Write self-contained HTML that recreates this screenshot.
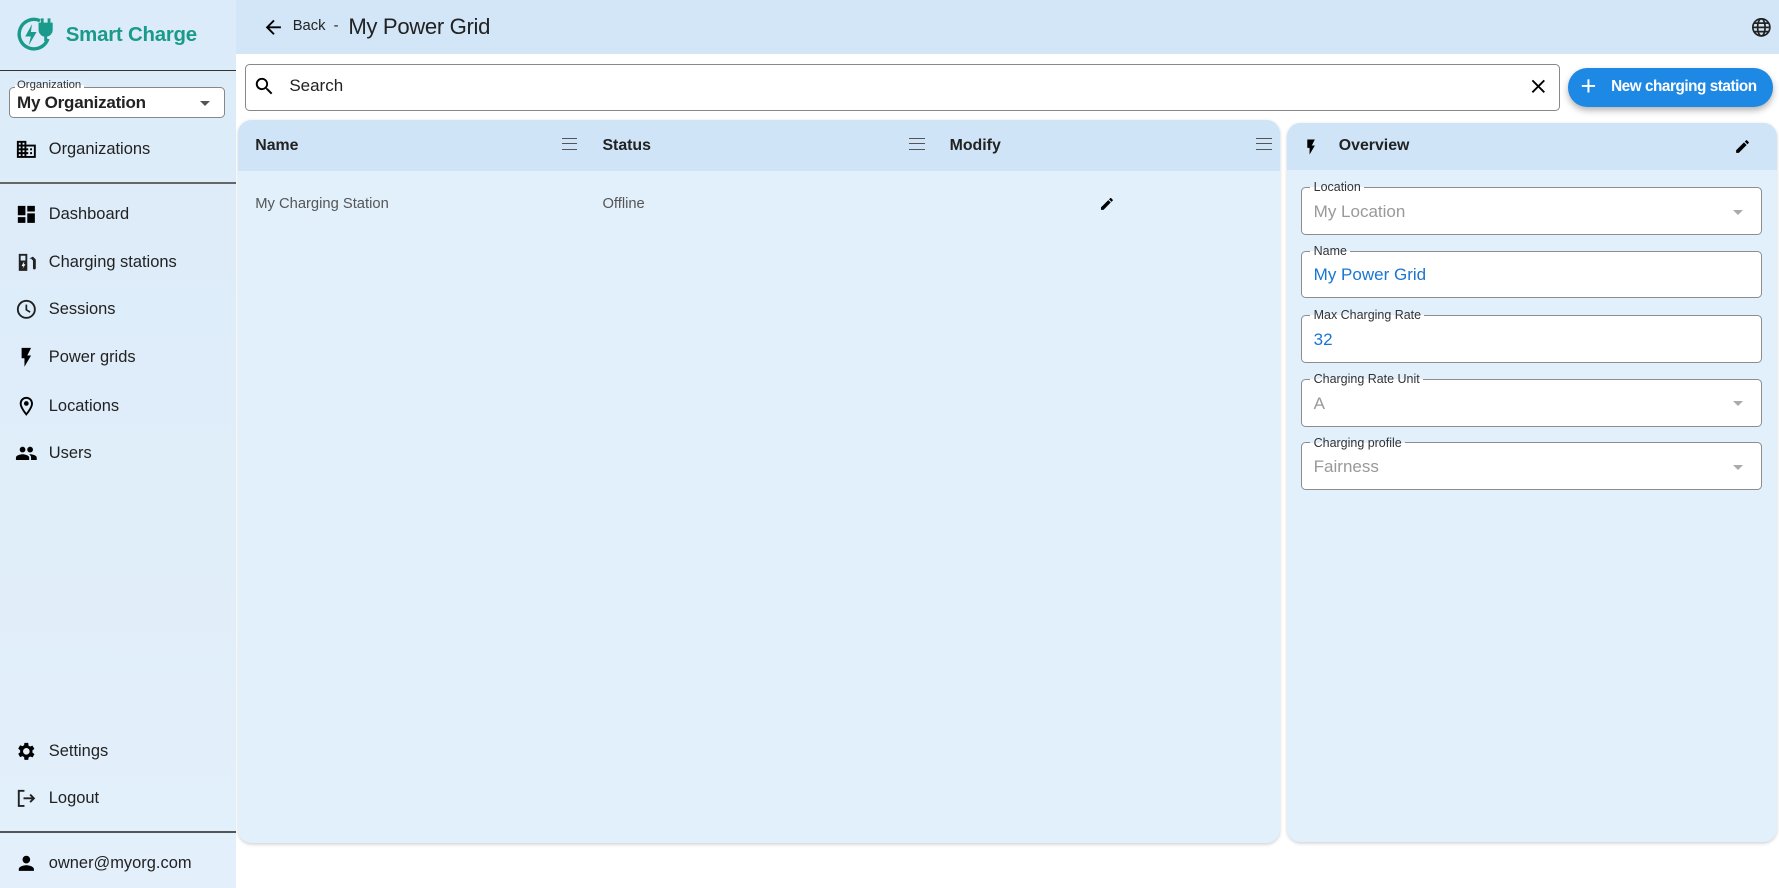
<!DOCTYPE html>
<html><head><meta charset="utf-8"><style>
html{zoom:1.13457}
*{box-sizing:border-box;margin:0;padding:0}
body{width:1568px;height:783px;overflow:hidden;font-family:"Liberation Sans",Roboto,sans-serif;background:#fff;position:relative;color:#222}
.abs{position:absolute}
.side{left:0;top:0;width:208px;height:783px;background:linear-gradient(180deg,#dcebf9,#e3f0fb)}
.top{left:208px;top:0;width:1360px;height:48px;background:#d2e6f8}
.nav{position:absolute;left:0;width:208px;height:36px;display:flex;align-items:center;font-size:14.5px;color:#222;letter-spacing:0}
.nav svg{position:absolute;left:13px;width:20px;height:20px}
.nav span{position:absolute;left:43px}
.card{background:#e2f0fc;border-radius:12px;overflow:hidden;box-shadow:0 1px 3px rgba(0,0,0,.18)}
.hdr{background:#cfe4f7;height:45px;position:relative}
.fld{position:absolute;left:13px;width:406px;height:42px;border:1px solid #8d8d8d;border-radius:4px;background:#fff}
.fld .lb{position:absolute;left:7px;top:-7px;font-size:11px;background:linear-gradient(#e2f0fc 50%,#fff 50%);padding:0 3px;color:#333}
.fld .v{position:absolute;left:10px;top:12px;font-size:15px}
.caret{position:absolute;right:16px;top:19px;border-left:5px solid transparent;border-right:5px solid transparent;border-top:5px solid #aaa}
.menu{position:absolute;top:16px;width:14px;height:10px;border-top:1.5px solid #555;border-bottom:1.5px solid #555}
.menu:after{content:"";position:absolute;left:0;right:0;top:3px;border-top:1.5px solid #555}
</style></head><body>
<div class="abs side"></div>
<div class="abs top"></div>
<svg class="abs" style="left:13px;top:13px" width="34" height="34" viewBox="0 0 34 34"><path d="M22 5 A13 13 0 1 0 29 21" fill="none" stroke="#1a9a8a" stroke-width="3"/><path d="M15 8 L9 19 H14 L12 27 L19 15 H14 Z" fill="#1a9a8a"/><path d="M22 8 h10 v5 a5 5 0 0 1-10 0z M24 3 v5 M30 3 v5 M27 17 v6" stroke="#1a9a8a" stroke-width="2.5" fill="#1a9a8a"/></svg>
<div class="abs" style="left:58px;top:21px;font-size:18px;font-weight:bold;color:#1a9a8a;letter-spacing:-.2px">Smart Charge</div>
<div class="abs" style="left:0;top:62px;width:208px;height:1px;background:#333"></div>
<div class="abs" style="left:8px;top:77px;width:190px;height:27px;border:1px solid #888;border-radius:4px;background:#fff"></div>
<div class="abs" style="left:13px;top:70px;font-size:10px;background:linear-gradient(#e0eefa 50%,#fff 50%);padding:0 2px;color:#333">Organization</div>
<div class="abs" style="left:15px;top:82px;font-size:15px;font-weight:bold;letter-spacing:-.2px">My Organization</div>
<div class="abs" style="left:176px;top:89px;border-left:5px solid transparent;border-right:5px solid transparent;border-top:5px solid #555"></div>
<div class="nav" style="top:114px"><svg viewBox="0 0 24 24"><path d="M12 7V3H2v18h20V7H12zM6 19H4v-2h2v2zm0-4H4v-2h2v2zm0-4H4V9h2v2zm0-4H4V5h2v2zm4 12H8v-2h2v2zm0-4H8v-2h2v2zm0-4H8V9h2v2zm0-4H8V5h2v2zm10 12h-8v-2h2v-2h-2v-2h2v-2h-2V9h8v10zm-2-8h-2v2h2v-2zm0 4h-2v2h2v-2z"/></svg><span>Organizations</span></div>
<div class="abs" style="left:0;top:160px;width:208px;height:2px;background:#666"></div>
<div class="nav" style="top:171px"><svg viewBox="0 0 24 24"><path d="M3 13h8V3H3v10zm0 8h8v-6H3v6zm10 0h8V11h-8v10zm0-18v6h8V3h-8z"/></svg><span>Dashboard</span></div>
<div class="nav" style="top:213px"><svg viewBox="0 0 24 24"><path d="M4 3h9v18H4z M6 5v5h5V5z M15 8h2l2 2v8a1.5 1.5 0 0 0 3 0v-9l-3-3" fill="#222"/><path d="M9 12l-2 4h2l-1 3 3-5H9l1-2z" fill="#fff"/></svg><span>Charging stations</span></div>
<div class="nav" style="top:255px"><svg viewBox="0 0 24 24"><circle cx="12" cy="12" r="9" fill="none" stroke="#222" stroke-width="2"/><path d="M12 7v5.5l4 2.4" fill="none" stroke="#222" stroke-width="1.8"/></svg><span>Sessions</span></div>
<div class="nav" style="top:297px"><svg viewBox="0 0 24 24"><path d="M7 2v11h3v9l7-12h-4l4-8z"/></svg><span>Power grids</span></div>
<div class="nav" style="top:340px"><svg viewBox="0 0 24 24"><path d="M12 2C8.1 2 5 5.1 5 9c0 5.2 7 13 7 13s7-7.8 7-13c0-3.9-3.1-7-7-7zm0 2a5 5 0 0 1 5 5c0 2.9-2.9 7.2-5 9.9C9.9 16.2 7 11.9 7 9a5 5 0 0 1 5-5zm0 2.5a2.5 2.5 0 1 0 0 5 2.5 2.5 0 0 0 0-5z"/></svg><span>Locations</span></div>
<div class="nav" style="top:382px"><svg viewBox="0 0 24 24"><path d="M16 11c1.7 0 3-1.3 3-3s-1.3-3-3-3-3 1.3-3 3 1.3 3 3 3zm-8 0c1.7 0 3-1.3 3-3S9.7 5 8 5 5 6.3 5 8s1.3 3 3 3zm0 2c-2.3 0-7 1.2-7 3.5V19h14v-2.5C15 14.2 10.3 13 8 13zm8 0c-.3 0-.6 0-1 .1 1.2.8 2 2 2 3.4V19h6v-2.5c0-2.3-4.7-3.5-7-3.5z"/></svg><span>Users</span></div>
<div class="nav" style="top:644px"><svg viewBox="0 0 24 24"><path d="M19.4 13c0-.3.1-.7.1-1s0-.7-.1-1l2.1-1.6-2-3.5-2.5 1c-.5-.4-1.1-.7-1.7-1L15 3h-4l-.4 2.6c-.6.3-1.2.6-1.7 1l-2.5-1-2 3.5L6.5 11c0 .3-.1.7-.1 1s0 .7.1 1l-2.1 1.6 2 3.5 2.5-1c.5.4 1.1.7 1.7 1L11 21h4l.4-2.6c.6-.3 1.2-.6 1.7-1l2.5 1 2-3.5-2.1-1.6zM13 15.5a3.5 3.5 0 1 1 0-7 3.5 3.5 0 0 1 0 7z" transform="translate(-1 0)"/></svg><span>Settings</span></div>
<div class="nav" style="top:686px"><svg viewBox="0 0 24 24"><path d="M10 4H4v16h6" fill="none" stroke="#222" stroke-width="2"/><path d="M9 12h11M16 8l4 4-4 4" fill="none" stroke="#222" stroke-width="2"/></svg><span>Logout</span></div>
<div class="abs" style="left:0;top:732px;width:208px;height:2px;background:#555"></div>
<div class="nav" style="top:743px"><svg viewBox="0 0 24 24"><path d="M12 12c2.2 0 4-1.8 4-4s-1.8-4-4-4-4 1.8-4 4 1.8 4 4 4zm0 2c-2.7 0-8 1.3-8 4v2h16v-2c0-2.7-5.3-4-8-4z"/></svg><span>owner@myorg.com</span></div>
<svg class="abs" style="left:231px;top:14px" width="20" height="20" viewBox="0 0 24 24"><path d="M20 11H7.8l5.6-5.6L12 4l-8 8 8 8 1.4-1.4L7.8 13H20z"/></svg>
<div class="abs" style="left:258px;top:16px;font-size:13px">Back&nbsp; -</div>
<div class="abs" style="left:307px;top:12px;font-size:19.5px;letter-spacing:-.3px">My Power Grid</div>
<svg class="abs" style="left:1542px;top:14px" width="20" height="20" viewBox="0 0 24 24"><g fill="none" stroke="#222" stroke-width="1.8"><circle cx="12" cy="12" r="9"/><ellipse cx="12" cy="12" rx="4" ry="9"/><path d="M3 12h18M4.5 7.5h15M4.5 16.5h15"/></g></svg>
<div class="abs" style="left:216px;top:56px;width:1159px;height:42px;border:1px solid #888;border-radius:4px;background:#fff"></div>
<svg class="abs" style="left:223px;top:66px" width="20" height="20" viewBox="0 0 24 24"><path d="M15.5 14h-.8l-.3-.3A6.5 6.5 0 1 0 9.5 16a6.5 6.5 0 0 0 4.2-1.6l.3.3v.8l5 5 1.5-1.5-5-5zm-6 0a4.5 4.5 0 1 1 0-9 4.5 4.5 0 0 1 0 9z"/></svg>
<div class="abs" style="left:255px;top:67px;font-size:15px">Search</div>
<svg class="abs" style="left:1346px;top:66px" width="20" height="20" viewBox="0 0 24 24"><path d="M19 6.4 17.6 5 12 10.6 6.4 5 5 6.4 10.6 12 5 17.6 6.4 19 12 13.4 17.6 19 19 17.6 13.4 12z"/></svg>
<div class="abs" style="left:1382px;top:60px;width:181px;height:34px;border-radius:17px;background:#1e88e5;box-shadow:0 3px 6px rgba(0,0,0,.3);color:#fff;font-size:13.5px;font-weight:bold">
<span style="position:absolute;left:11px;top:3px;font-size:24px;font-weight:normal;line-height:26px">+</span><span style="position:absolute;left:38px;top:9px;letter-spacing:-.4px;white-space:nowrap">New charging station</span></div>
<div class="abs card" style="left:210px;top:106px;width:918px;height:637px">
<div class="hdr">
<div class="abs" style="left:15px;top:15px;font-size:14px;font-weight:bold">Name</div>
<div class="menu" style="left:285px"></div>
<div class="abs" style="left:321px;top:15px;font-size:14px;font-weight:bold">Status</div>
<div class="menu" style="left:591px"></div>
<div class="abs" style="left:627px;top:15px;font-size:14px;font-weight:bold">Modify</div>
<div class="menu" style="left:897px"></div>
</div>
<div class="abs" style="left:15px;top:67px;font-size:13px;color:#555">My Charging Station</div>
<div class="abs" style="left:321px;top:67px;font-size:13px;color:#555">Offline</div>
<svg class="abs" style="left:759px;top:67px" width="14" height="14" viewBox="0 0 24 24"><path d="M3 17.2V21h3.8L17.8 9.9l-3.7-3.7L3 17.2zM20.7 7c.4-.4.4-1 0-1.4l-2.3-2.3c-.4-.4-1-.4-1.4 0l-1.8 1.8 3.7 3.7L20.7 7z"/></svg>
</div>
<div class="abs card" style="left:1134px;top:108px;width:432px;height:634px">
<div class="hdr" style="height:42px">
<svg class="abs" style="left:14px;top:14px" width="16" height="16" viewBox="0 0 24 24"><path d="M7 2v11h3v9l7-12h-4l4-8z"/></svg>
<div class="abs" style="left:46px;top:13px;font-size:14px;font-weight:bold">Overview</div>
<svg class="abs" style="left:394px;top:14px" width="15" height="15" viewBox="0 0 24 24"><path d="M3 17.2V21h3.8L17.8 9.9l-3.7-3.7L3 17.2zM20.7 7c.4-.4.4-1 0-1.4l-2.3-2.3c-.4-.4-1-.4-1.4 0l-1.8 1.8 3.7 3.7L20.7 7z"/></svg>
</div>
<div class="fld" style="top:57px"><div class="lb">Location</div><div class="v" style="color:#999">My Location</div><div class="caret"></div></div>
<div class="fld" style="top:113px"><div class="lb">Name</div><div class="v" style="color:#1976d2">My Power Grid</div></div>
<div class="fld" style="top:170px"><div class="lb">Max Charging Rate</div><div class="v" style="color:#1976d2">32</div></div>
<div class="fld" style="top:226px"><div class="lb">Charging Rate Unit</div><div class="v" style="color:#999">A</div><div class="caret"></div></div>
<div class="fld" style="top:282px"><div class="lb">Charging profile</div><div class="v" style="color:#999">Fairness</div><div class="caret"></div></div>
</div>
</body></html>
